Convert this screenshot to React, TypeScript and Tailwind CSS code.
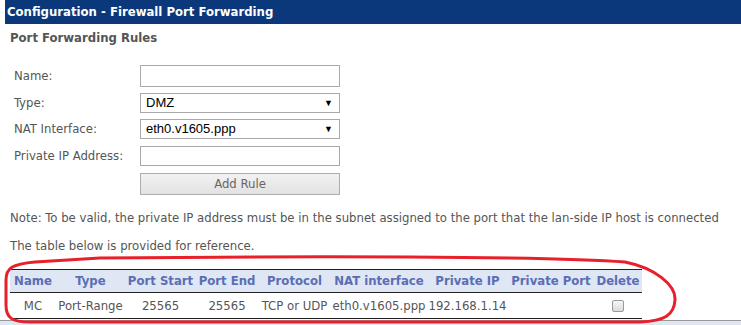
import React from "react";

const cols = [
  { h: "Name", d: "MC", w: "w-[46px]" },
  { h: "Type", d: "Port-Range", w: "w-[69px]" },
  { h: "Port Start", d: "25565", w: "w-[71px]" },
  { h: "Port End", d: "25565", w: "w-[62px]" },
  { h: "Protocol", d: "TCP or UDP", w: "w-[73px]" },
  { h: "NAT interface", d: "eth0.v1605.ppp", w: "w-[96px]" },
  { h: "Private IP", d: "192.168.1.14", w: "w-[81px]" },
  { h: "Private Port", d: "", w: "w-[86px]" },
  { h: "Delete", d: "", w: "w-[48px]" },
];

function Label({ children }: { children: React.ReactNode }) {
  return <div className="w-[130px] pl-[4px] text-[13px] text-[#555]">{children}</div>;
}

function Select({ value }: { value: string }) {
  return (
    <div className="flex h-[20px] w-[200px] items-center justify-between border border-[#a9a9a9] bg-white pl-[5px] pr-[6px] font-['Liberation_Sans',Arial,sans-serif] text-[13px] text-black">
      <span>{value}</span>
      <span className="text-[9px] leading-none">▼</span>
    </div>
  );
}

export default function App() {
  return (
    <div className="relative h-[325px] w-[741px] overflow-hidden bg-white font-['DejaVu_Sans_Condensed','DejaVu_Sans',sans-serif] leading-[16px]">
      <div className="ml-[5px] flex h-[24px] items-center bg-[#0a387a] pl-[2px] text-[13px] font-bold text-white">
        Configuration - Firewall Port Forwarding
      </div>
      <div className="mt-[6px] pl-[10px] text-[13px] font-bold text-[#555]">Port Forwarding Rules</div>

      <div className="ml-[10px] mt-[19px] flex flex-col">
        <div className="flex items-center">
          <Label>Name:</Label>
          <div className="h-[22px] w-[200px] border border-[#a9a9a9] bg-white" />
        </div>
        <div className="mt-[6px] flex items-center">
          <Label>Type:</Label>
          <Select value="DMZ" />
        </div>
        <div className="mt-[6px] flex items-center">
          <Label>NAT Interface:</Label>
          <Select value="eth0.v1605.ppp" />
        </div>
        <div className="mt-[7px] flex items-center">
          <Label>Private IP Address:</Label>
          <div className="h-[20px] w-[200px] border border-[#a9a9a9] bg-white" />
        </div>
        <div className="mt-[7px] flex items-center">
          <div className="w-[130px]" />
          <div className="flex h-[22px] w-[200px] items-center justify-center border border-[#adadad] bg-gradient-to-b from-[#f2f2f2] to-[#e2e2e2] text-[13px] text-[#666]">
            Add Rule
          </div>
        </div>
      </div>

      <div className="mt-[15px] pl-[10px] text-[13px] text-[#555]">
        Note: To be valid, the private IP address must be in the subnet assigned to the port that the lan-side IP host is connected
      </div>
      <div className="mt-[12px] pl-[10px] text-[13px] text-[#555]">The table below is provided for reference.</div>

      <table className="ml-[10px] mt-[15px] w-[632px] table-fixed border-collapse">
        <thead>
          <tr className="h-[23px] border-y border-[#222] bg-[#dfe6f4]">
            {cols.map((c) => (
              <th key={c.h} className={`${c.w} p-0 text-center text-[13px] font-bold whitespace-nowrap text-[#5b6eb4]`}>
                {c.h}
              </th>
            ))}
          </tr>
        </thead>
        <tbody>
          <tr className="h-[26px] border-b border-[#222]">
            {cols.map((c) => (
              <td key={c.h} className="p-0 text-center text-[13px] whitespace-nowrap text-[#555]">
                {c.h === "Delete" ? (
                  <div className="flex justify-center">
                    <div className="h-[12px] w-[12px] rounded-[2px] border border-[#999] bg-gradient-to-b from-[#f6f6f6] to-[#dcdcdc]" />
                  </div>
                ) : (
                  c.d
                )}
              </td>
            ))}
          </tr>
        </tbody>
      </table>

      <div className="mt-[1px] h-[6px] border-t border-[#999] bg-[#dfe6f4]" />

      <svg className="pointer-events-none absolute left-0 top-0" width="741" height="325" viewBox="0 0 741 325">
        <path
          d="M 100 258 C 300 256, 550 256, 625 262 C 655 268, 676 285, 675 300 C 674 315, 665 321, 640 322 L 30 322 C 12 322, 6 318, 6 305 L 6 280 C 6 268, 12 264, 35 262 L 100 258 Z"
          fill="none"
          stroke="#e8202a"
          strokeWidth="3"
        />
      </svg>
    </div>
  );
}
